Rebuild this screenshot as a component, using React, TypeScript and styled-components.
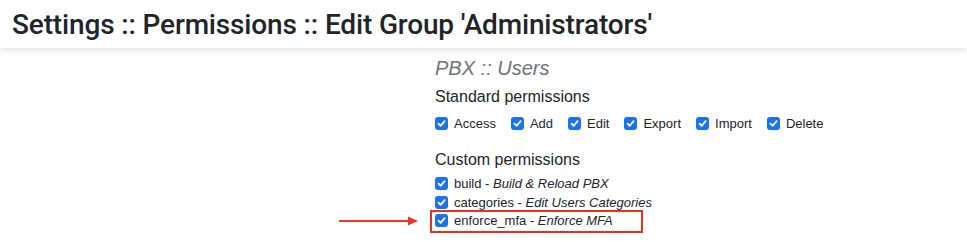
import styled, { createGlobalStyle } from 'styled-components'

const GlobalStyle = createGlobalStyle`
  body {
    margin: 0;
    background: #ffffff;
    font-family: "Liberation Sans", Arial, sans-serif;
    color: #212529;
  }
`

const Header = styled.header`
  height: 48px;
  display: flex;
  align-items: center;
  padding: 0 12px;
  background: #ffffff;
  box-shadow: 0 2px 6px rgba(0, 0, 0, 0.12);
  position: relative;

  h1 {
    margin: 0;
    font-family: Roboto, "Liberation Sans", sans-serif;
    font-size: 28px;
    font-weight: 500;
    letter-spacing: -0.15px;
    color: #212529;
  }
`

const Content = styled.main`
  padding: 9px 0 6px 435px;
`

const Section = styled.h2`
  margin: 0 0 8px;
  font-size: 20px;
  font-weight: 400;
  font-style: italic;
  color: #6c757d;
`

const Heading = styled.h3<{ $top?: number }>`
  margin: ${(p) => p.$top ?? 0}px 0 7px;
  font-size: 16px;
  font-weight: 400;
  color: #212529;
`

const InlineList = styled.div`
  display: flex;
  gap: 15px;
  padding-top: 1px;
`

const StackList = styled.div`
  display: flex;
  flex-direction: column;
  margin-top: -1px;
`

const Item = styled.label<{ $marked?: boolean }>`
  display: flex;
  align-items: center;
  gap: 6px;
  height: 18.5px;
  font-size: 13px;
  position: relative;

  em {
    font-style: italic;
  }

  ${(p) =>
    p.$marked &&
    `
    &::after {
      content: '';
      position: absolute;
      left: -5px;
      top: -2px;
      width: 209px;
      height: 19px;
      border: 2px solid #e8321f;
    }
  `}
`

const Box = styled.span`
  width: 13px;
  height: 13px;
  border-radius: 3px;
  background: #1a73e8;
  display: flex;
  align-items: center;
  justify-content: center;
  flex-shrink: 0;
`

const Arrow = styled.svg`
  position: absolute;
  left: -96px;
  top: 3px;
`

const Check = () => (
  <Box>
    <svg width="9" height="9" viewBox="0 0 9 9">
      <path d="M1.5 4.7 L3.6 6.8 L7.6 2.2" fill="none" stroke="#fff" strokeWidth="1.8" strokeLinecap="round" strokeLinejoin="round" />
    </svg>
  </Box>
)

const standard = ['Access', 'Add', 'Edit', 'Export', 'Import', 'Delete']
const custom = [
  { key: 'build', desc: 'Build & Reload PBX' },
  { key: 'categories', desc: 'Edit Users Categories' },
  { key: 'enforce_mfa', desc: 'Enforce MFA', marked: true },
]

const App = () => {
  return (
    <>
      <GlobalStyle />
      <Header>
        <h1>Settings :: Permissions :: Edit Group 'Administrators'</h1>
      </Header>
      <Content>
        <Section>PBX :: Users</Section>
        <Heading>Standard permissions</Heading>
        <InlineList>
          {standard.map((s) => (
            <Item key={s}>
              <Check />
              <span>{s}</span>
            </Item>
          ))}
        </InlineList>
        <Heading $top={18}>Custom permissions</Heading>
        <StackList>
          {custom.map((c) => (
            <Item key={c.key} $marked={c.marked}>
              {c.marked && (
                <Arrow width="80" height="12" viewBox="0 0 80 12">
                  <line x1="0" y1="6" x2="70" y2="6" stroke="#f0341f" strokeWidth="2" />
                  <polygon points="69,1.5 79,6 69,10.5" fill="#f0341f" />
                </Arrow>
              )}
              <Check />
              <span>
                {c.key} - <em>{c.desc}</em>
              </span>
            </Item>
          ))}
        </StackList>
      </Content>
    </>
  )
}

export default App
